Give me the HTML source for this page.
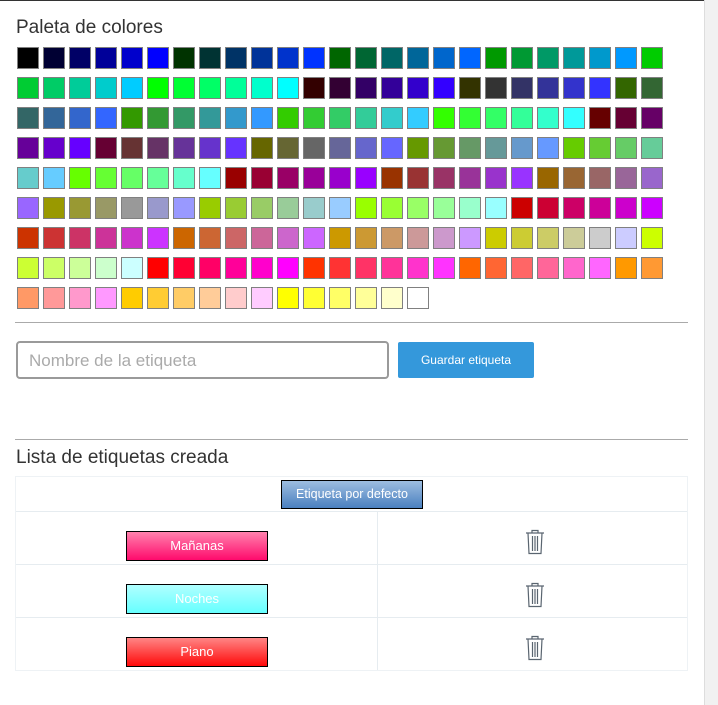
<!DOCTYPE html>
<html><head><meta charset="utf-8"><style>
*{box-sizing:border-box}
body{margin:0;width:718px;height:705px;background:#fff;font-family:"Liberation Sans",sans-serif;position:relative;overflow:hidden;color:#333}
.topb{position:absolute;left:0;top:0;width:704px;height:1px;background:#333}
.sb{position:absolute;left:704px;top:0;width:14px;height:705px;background:#f1f1f1;border-left:1px solid #ddd}
h3{position:absolute;margin:0;font-weight:normal;font-size:19px;left:16px}
.pal{position:absolute;left:17px;top:47px;width:660px;display:flex;flex-wrap:wrap}
.pal i{display:block;width:22px;height:22px;border:1px solid #808080;margin:0 4px 8px 0}
hr{position:absolute;left:15px;width:673px;margin:0;border:0;border-top:1px solid #aaa;height:0}
.inp{position:absolute;left:16px;top:341px;width:373px;height:38px;border:2px solid #9a9a9a;border-radius:4px;font-size:17px;color:#aaa;padding:8px 11px}
.btn{position:absolute;left:398px;top:342px;width:136px;height:36px;background:#3498db;border-radius:2px;color:#fff;font-size:12px;text-align:center;line-height:36px}
.tbl{position:absolute;left:15px;top:476px;width:673px;border:1px solid #eef2f5}
.row{height:53px;border-top:1px solid #e6ecf0;position:relative}
.row:first-child{height:34px;border-top:0}
.row .div{position:absolute;left:361px;top:0;bottom:0;width:1px;background:#e6ecf0}
.lab{position:absolute;left:110px;top:19px;width:142px;height:30px;border:1px solid #000;color:#fff;font-size:13px;text-align:center;line-height:28px}
.def{position:absolute;left:265px;top:3px;width:142px;height:29px;border:1px solid #000;color:#fff;font-size:12.5px;text-align:center;line-height:27px;background:linear-gradient(#9dbde0,#4a80c0)}
.tr{position:absolute;left:509px;top:17px}
</style></head><body>
<div class="topb"></div><div class="sb"></div>
<h3 style="top:17px">Paleta de colores</h3>
<div class="pal">
<i style="background:#000000"></i><i style="background:#000033"></i><i style="background:#000066"></i><i style="background:#000099"></i><i style="background:#0000cc"></i><i style="background:#0000ff"></i><i style="background:#003300"></i><i style="background:#003333"></i><i style="background:#003366"></i><i style="background:#003399"></i><i style="background:#0033cc"></i><i style="background:#0033ff"></i><i style="background:#006600"></i><i style="background:#006633"></i><i style="background:#006666"></i><i style="background:#006699"></i><i style="background:#0066cc"></i><i style="background:#0066ff"></i><i style="background:#009900"></i><i style="background:#009933"></i><i style="background:#009966"></i><i style="background:#009999"></i><i style="background:#0099cc"></i><i style="background:#0099ff"></i><i style="background:#00cc00"></i>
<i style="background:#00cc33"></i><i style="background:#00cc66"></i><i style="background:#00cc99"></i><i style="background:#00cccc"></i><i style="background:#00ccff"></i><i style="background:#00ff00"></i><i style="background:#00ff33"></i><i style="background:#00ff66"></i><i style="background:#00ff99"></i><i style="background:#00ffcc"></i><i style="background:#00ffff"></i><i style="background:#330000"></i><i style="background:#330033"></i><i style="background:#330066"></i><i style="background:#330099"></i><i style="background:#3300cc"></i><i style="background:#3300ff"></i><i style="background:#333300"></i><i style="background:#333333"></i><i style="background:#333366"></i><i style="background:#333399"></i><i style="background:#3333cc"></i><i style="background:#3333ff"></i><i style="background:#336600"></i><i style="background:#336633"></i>
<i style="background:#336666"></i><i style="background:#336699"></i><i style="background:#3366cc"></i><i style="background:#3366ff"></i><i style="background:#339900"></i><i style="background:#339933"></i><i style="background:#339966"></i><i style="background:#339999"></i><i style="background:#3399cc"></i><i style="background:#3399ff"></i><i style="background:#33cc00"></i><i style="background:#33cc33"></i><i style="background:#33cc66"></i><i style="background:#33cc99"></i><i style="background:#33cccc"></i><i style="background:#33ccff"></i><i style="background:#33ff00"></i><i style="background:#33ff33"></i><i style="background:#33ff66"></i><i style="background:#33ff99"></i><i style="background:#33ffcc"></i><i style="background:#33ffff"></i><i style="background:#660000"></i><i style="background:#660033"></i><i style="background:#660066"></i>
<i style="background:#660099"></i><i style="background:#6600cc"></i><i style="background:#6600ff"></i><i style="background:#660033"></i><i style="background:#663333"></i><i style="background:#663366"></i><i style="background:#663399"></i><i style="background:#6633cc"></i><i style="background:#6633ff"></i><i style="background:#666600"></i><i style="background:#666633"></i><i style="background:#666666"></i><i style="background:#666699"></i><i style="background:#6666cc"></i><i style="background:#6666ff"></i><i style="background:#669900"></i><i style="background:#669933"></i><i style="background:#669966"></i><i style="background:#669999"></i><i style="background:#6699cc"></i><i style="background:#6699ff"></i><i style="background:#66cc00"></i><i style="background:#66cc33"></i><i style="background:#66cc66"></i><i style="background:#66cc99"></i>
<i style="background:#66cccc"></i><i style="background:#66ccff"></i><i style="background:#66ff00"></i><i style="background:#66ff33"></i><i style="background:#66ff66"></i><i style="background:#66ff99"></i><i style="background:#66ffcc"></i><i style="background:#66ffff"></i><i style="background:#990000"></i><i style="background:#990033"></i><i style="background:#990066"></i><i style="background:#990099"></i><i style="background:#9900cc"></i><i style="background:#9900ff"></i><i style="background:#993300"></i><i style="background:#993333"></i><i style="background:#993366"></i><i style="background:#993399"></i><i style="background:#9933cc"></i><i style="background:#9933ff"></i><i style="background:#996600"></i><i style="background:#996633"></i><i style="background:#996666"></i><i style="background:#996699"></i><i style="background:#9966cc"></i>
<i style="background:#9966ff"></i><i style="background:#999900"></i><i style="background:#999933"></i><i style="background:#999966"></i><i style="background:#999999"></i><i style="background:#9999cc"></i><i style="background:#9999ff"></i><i style="background:#99cc00"></i><i style="background:#99cc33"></i><i style="background:#99cc66"></i><i style="background:#99cc99"></i><i style="background:#99cccc"></i><i style="background:#99ccff"></i><i style="background:#99ff00"></i><i style="background:#99ff33"></i><i style="background:#99ff66"></i><i style="background:#99ff99"></i><i style="background:#99ffcc"></i><i style="background:#99ffff"></i><i style="background:#cc0000"></i><i style="background:#cc0033"></i><i style="background:#cc0066"></i><i style="background:#cc0099"></i><i style="background:#cc00cc"></i><i style="background:#cc00ff"></i>
<i style="background:#cc3300"></i><i style="background:#cc3333"></i><i style="background:#cc3366"></i><i style="background:#cc3399"></i><i style="background:#cc33cc"></i><i style="background:#cc33ff"></i><i style="background:#cc6600"></i><i style="background:#cc6633"></i><i style="background:#cc6666"></i><i style="background:#cc6699"></i><i style="background:#cc66cc"></i><i style="background:#cc66ff"></i><i style="background:#cc9900"></i><i style="background:#cc9933"></i><i style="background:#cc9966"></i><i style="background:#cc9999"></i><i style="background:#cc99cc"></i><i style="background:#cc99ff"></i><i style="background:#cccc00"></i><i style="background:#cccc33"></i><i style="background:#cccc66"></i><i style="background:#cccc99"></i><i style="background:#cccccc"></i><i style="background:#ccccff"></i><i style="background:#ccff00"></i>
<i style="background:#ccff33"></i><i style="background:#ccff66"></i><i style="background:#ccff99"></i><i style="background:#ccffcc"></i><i style="background:#ccffff"></i><i style="background:#ff0000"></i><i style="background:#ff0033"></i><i style="background:#ff0066"></i><i style="background:#ff0099"></i><i style="background:#ff00cc"></i><i style="background:#ff00ff"></i><i style="background:#ff3300"></i><i style="background:#ff3333"></i><i style="background:#ff3366"></i><i style="background:#ff3399"></i><i style="background:#ff33cc"></i><i style="background:#ff33ff"></i><i style="background:#ff6600"></i><i style="background:#ff6633"></i><i style="background:#ff6666"></i><i style="background:#ff6699"></i><i style="background:#ff66cc"></i><i style="background:#ff66ff"></i><i style="background:#ff9900"></i><i style="background:#ff9933"></i>
<i style="background:#ff9966"></i><i style="background:#ff9999"></i><i style="background:#ff99cc"></i><i style="background:#ff99ff"></i><i style="background:#ffcc00"></i><i style="background:#ffcc33"></i><i style="background:#ffcc66"></i><i style="background:#ffcc99"></i><i style="background:#ffcccc"></i><i style="background:#ffccff"></i><i style="background:#ffff00"></i><i style="background:#ffff33"></i><i style="background:#ffff66"></i><i style="background:#ffff99"></i><i style="background:#ffffcc"></i><i style="background:#ffffff"></i>
</div>
<hr style="top:322px">
<div class="inp">Nombre de la etiqueta</div>
<div class="btn">Guardar etiqueta</div>
<hr style="top:439px">
<h3 style="top:447px">Lista de etiquetas creada</h3>
<div class="tbl">
<div class="row"><div class="def">Etiqueta por defecto</div></div>
<div class="row"><div class="div"></div><div class="lab" style="background:linear-gradient(#ff82ad,#ff0a6c)">Mañanas</div><svg class="tr" width="20" height="26" viewBox="0 0 20 26" fill="none" stroke="#5a6570" stroke-width="1.2"><path d="M1 4h18M7 4V1.5h6V4M3 4l1 20.5h12l1-20.5M7.5 7v15M10 7v15M12.5 7v15"/></svg></div>
<div class="row"><div class="div"></div><div class="lab" style="background:linear-gradient(#b0ffff,#66ffff)">Noches</div><svg class="tr" width="20" height="26" viewBox="0 0 20 26" fill="none" stroke="#5a6570" stroke-width="1.2"><path d="M1 4h18M7 4V1.5h6V4M3 4l1 20.5h12l1-20.5M7.5 7v15M10 7v15M12.5 7v15"/></svg></div>
<div class="row"><div class="div"></div><div class="lab" style="background:linear-gradient(#ff8585,#ff0a0a)">Piano</div><svg class="tr" width="20" height="26" viewBox="0 0 20 26" fill="none" stroke="#5a6570" stroke-width="1.2"><path d="M1 4h18M7 4V1.5h6V4M3 4l1 20.5h12l1-20.5M7.5 7v15M10 7v15M12.5 7v15"/></svg></div>
</div>
</body></html>
